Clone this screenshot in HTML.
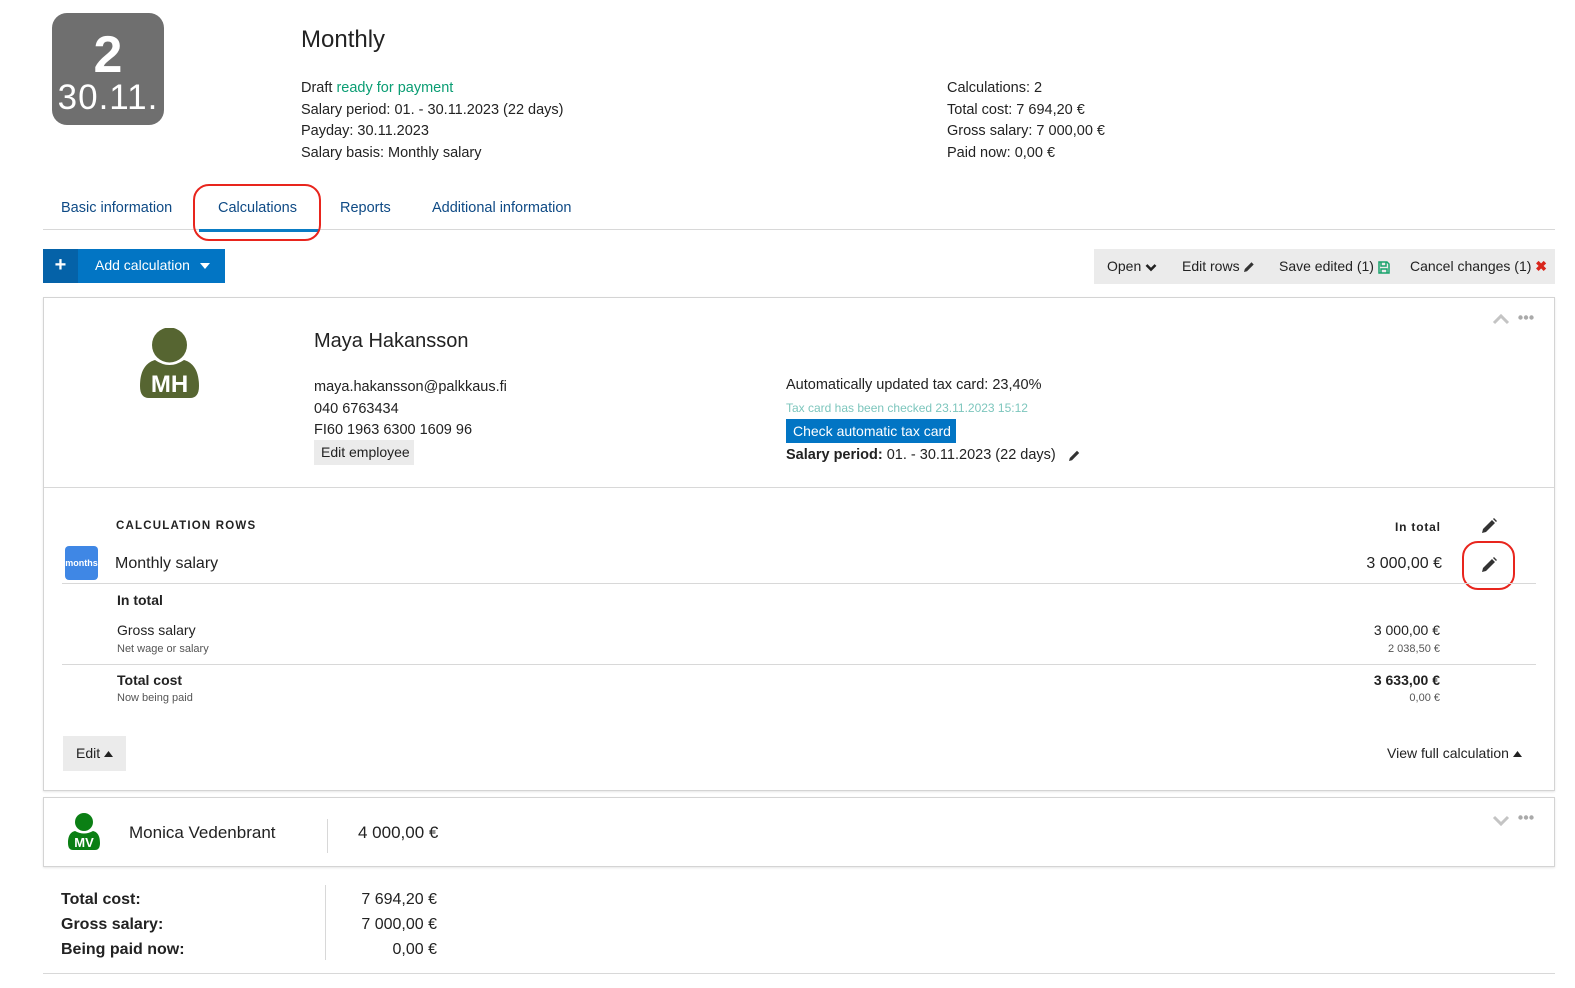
<!DOCTYPE html>
<html><head><meta charset="utf-8"><style>
*{margin:0;padding:0;box-sizing:border-box}
body{width:1575px;height:988px;background:#fff;font-family:"Liberation Sans",sans-serif;color:#222;position:relative;overflow:hidden}
.a{position:absolute;white-space:nowrap}
.t15{font-size:14.5px}
.r{text-align:right}
svg{display:inline-block;vertical-align:middle}
</style></head><body>
<div class="a" style="left:52px;top:13px;width:112px;height:112px;background:#6f6f6f;border-radius:15px;color:#fff;text-align:center">
<div style="font-size:52px;font-weight:bold;line-height:50px;margin-top:17px">2</div>
<div style="font-size:35px;line-height:36px;margin-top:0px;letter-spacing:1px">30.11.</div></div>
<div class="a" style="left:301px;top:26px;font-size:24px">Monthly</div>
<div class="a t15" style="left:301px;top:78px;line-height:21.7px">Draft <span style="color:#0a9d73">ready for payment</span><br>Salary period: 01. - 30.11.2023 (22 days)<br>Payday: 30.11.2023<br>Salary basis: Monthly salary</div>
<div class="a t15" style="left:947px;top:78px;line-height:21.7px">Calculations: 2<br>Total cost: 7 694,20 €<br>Gross salary: 7 000,00 €<br>Paid now: 0,00 €</div>
<div class="a t15" style="left:61px;top:200px;color:#0e4a85">Basic information</div>
<div class="a t15" style="left:218px;top:200px;color:#0e4a85">Calculations</div>
<div class="a t15" style="left:340px;top:200px;color:#0e4a85">Reports</div>
<div class="a t15" style="left:432px;top:200px;color:#0e4a85">Additional information</div>
<div class="a" style="left:43px;top:229px;width:1512px;height:1px;background:#d8d8d8"></div>
<div class="a" style="left:199px;top:229px;width:120px;height:3px;background:#0a7cc4"></div>
<div class="a" style="left:193px;top:184px;width:128px;height:57px;border:2px solid #e8251d;border-radius:16px"></div>
<div class="a" style="left:43px;top:249px;width:182px;height:34px;background:#0275c4"></div>
<div class="a" style="left:43px;top:249px;width:35px;height:34px;background:#0562a8;color:#fff;font-size:20px;font-weight:bold;text-align:center;line-height:32px">+</div>
<div class="a" style="left:95px;top:257px;color:#fff;font-size:14px">Add calculation <svg width="10" height="6" style="margin-left:6px"><path d="M0 0H10L5 6Z" fill="#fff"/></svg></div>
<div class="a" style="left:1094px;top:249px;width:461px;height:35px;background:#ebebeb"></div>
<div class="a" style="left:1107px;top:258px;font-size:14px">Open <svg width="12" height="9"><path d="M1.5 2L6 6.5 10.5 2" stroke="#222" stroke-width="2.6" fill="none"/></svg></div>
<div class="a" style="left:1182px;top:258px;font-size:14px">Edit rows <svg width="12" height="12"><path d="M1 11L1.8 8 8.5 1.3 10.7 3.5 4 10.2Z" fill="#333"/></svg></div>
<div class="a" style="left:1279px;top:258px;font-size:14px">Save edited (1) <svg width="12" height="13"><path d="M1 1H9L11 3V12H1Z M3 1V5H8V1 M3 12V8H9V12" stroke="#19a36c" stroke-width="1.5" fill="none"/></svg></div>
<div class="a" style="left:1410px;top:258px;font-size:14px">Cancel changes (1) <b style="color:#d9261c">✖</b></div>
<div class="a" style="left:43px;top:297px;width:1512px;height:494px;border:1px solid #d4d4d4;box-shadow:0 1px 2px rgba(0,0,0,.1)"></div>
<svg class="a" style="left:1492px;top:313px" width="18" height="12"><path d="M2 10L9 3 16 10" stroke="#c4c4c4" stroke-width="3" fill="none"/></svg>
<svg class="a" style="left:1518px;top:315px" width="16" height="5"><circle cx="2.5" cy="2.5" r="2.2" fill="#aaa"/><circle cx="8" cy="2.5" r="2.2" fill="#aaa"/><circle cx="13.5" cy="2.5" r="2.2" fill="#aaa"/></svg>
<svg class="a" style="left:140px;top:328px" width="59" height="70"><circle cx="29.5" cy="17" r="17.5" fill="#566531"/><path d="M0 58 C0 40 8 34 15 32 Q29.5 42 44 32 C51 34 59 40 59 58 Q59 70 50 70 L9 70 Q0 70 0 58Z" fill="#566531"/><text x="29.5" y="64" text-anchor="middle" fill="#fff" font-family="Liberation Sans" font-weight="bold" font-size="24">MH</text></svg>
<div class="a" style="left:314px;top:330px;font-size:20px">Maya Hakansson</div>
<div class="a t15" style="left:314px;top:377px;line-height:21.5px">maya.hakansson@palkkaus.fi<br>040 6763434<br>FI60 1963 6300 1609 96</div>
<div class="a" style="left:314px;top:440px;width:100px;height:25px;background:#ebebeb;font-size:14px;line-height:25px;padding-left:7px">Edit employee</div>
<div class="a t15" style="left:786px;top:377px">Automatically updated tax card: 23,40%</div>
<div class="a" style="left:786px;top:401px;font-size:12px;color:#7dc6bd">Tax card has been checked 23.11.2023 15:12</div>
<div class="a" style="left:786px;top:419px;width:170px;height:24px;background:#0275c4;color:#fff;font-size:14px;line-height:24px;padding-left:7px">Check automatic tax card</div>
<div class="a t15" style="left:786px;top:447px"><b>Salary period:</b> 01. - 30.11.2023 (22 days) &nbsp; <svg width="13" height="13"><path d="M1 12L1.8 9 9 1.8 11.2 4 4 11.2Z" fill="#333"/></svg></div>
<div class="a" style="left:44px;top:487px;width:1510px;height:1px;background:#d8d8d8"></div>
<div class="a" style="left:116px;top:520px;font-size:11.5px;font-weight:bold;letter-spacing:1.2px">CALCULATION ROWS</div>
<div class="a" style="left:1395px;top:520px;font-size:12px;font-weight:bold;letter-spacing:.8px">In total</div>
<svg class="a" style="left:1481px;top:518px" width="16" height="16"><path d="M1 15L2 11 11 2 14 5 5 14Z M12 1L13 0 16 3 15 4Z" fill="#333"/></svg>
<div class="a" style="left:65px;top:546px;width:33px;height:34px;background:#3f87e5;border-radius:4px;color:#fff;font-size:9px;line-height:34px;text-align:center;font-weight:bold">months</div>
<div class="a" style="left:115px;top:555px;font-size:16px">Monthly salary</div>
<div class="a r" style="left:1300px;width:142px;top:555px;font-size:16px">3 000,00 €</div>
<svg class="a" style="left:1481px;top:557px" width="16" height="16"><path d="M1 15L2 11 11 2 14 5 5 14Z M12 1L13 0 16 3 15 4Z" fill="#333"/></svg>
<div class="a" style="left:1462px;top:541px;width:53px;height:49px;border:2px solid #e8251d;border-radius:16px"></div>
<div class="a" style="left:62px;top:583px;width:1474px;height:1px;background:#d8d8d8"></div>
<div class="a" style="left:117px;top:592px;font-size:14px;font-weight:bold">In total</div>
<div class="a" style="left:117px;top:622px;font-size:14px">Gross salary</div>
<div class="a" style="left:117px;top:643px;font-size:11px;color:#555">Net wage or salary</div>
<div class="a r" style="left:1300px;width:140px;top:622px;font-size:14px">3 000,00 €</div>
<div class="a r" style="left:1300px;width:140px;top:643px;font-size:11px;color:#555">2 038,50 €</div>
<div class="a" style="left:62px;top:664px;width:1474px;height:1px;background:#d8d8d8"></div>
<div class="a" style="left:117px;top:672px;font-size:14px;font-weight:bold">Total cost</div>
<div class="a" style="left:117px;top:692px;font-size:11px;color:#555">Now being paid</div>
<div class="a r" style="left:1300px;width:140px;top:672px;font-size:14px;font-weight:bold">3 633,00 €</div>
<div class="a r" style="left:1300px;width:140px;top:692px;font-size:11px;color:#555">0,00 €</div>
<div class="a" style="left:63px;top:736px;width:63px;height:35px;background:#ebebeb;font-size:14px;line-height:35px;padding-left:13px">Edit <svg width="9" height="6"><path d="M0 6H9L4.5 0Z" fill="#222"/></svg></div>
<div class="a" style="left:1387px;top:745px;font-size:14px">View full calculation <svg width="9" height="6"><path d="M0 6H9L4.5 0Z" fill="#222"/></svg></div>
<div class="a" style="left:43px;top:797px;width:1512px;height:70px;border:1px solid #d4d4d4;box-shadow:0 1px 2px rgba(0,0,0,.1)"></div>
<svg class="a" style="left:1492px;top:814px" width="18" height="12"><path d="M2 3L9 10 16 3" stroke="#c4c4c4" stroke-width="3" fill="none"/></svg>
<svg class="a" style="left:1518px;top:815px" width="16" height="5"><circle cx="2.5" cy="2.5" r="2.2" fill="#aaa"/><circle cx="8" cy="2.5" r="2.2" fill="#aaa"/><circle cx="13.5" cy="2.5" r="2.2" fill="#aaa"/></svg>
<svg class="a" style="left:68px;top:813px" width="32" height="37"><circle cx="16" cy="9" r="9" fill="#0b7f14"/><path d="M0 30 C0 22 3 19 7 18 Q16 23 25 18 C29 19 32 22 32 30 Q32 37 27 37 L5 37 Q0 37 0 30Z" fill="#0b7f14"/><text x="16" y="34" text-anchor="middle" fill="#fff" font-family="Liberation Sans" font-weight="bold" font-size="13">MV</text></svg>
<div class="a" style="left:129px;top:823px;font-size:17px">Monica Vedenbrant</div>
<div class="a" style="left:327px;top:819px;width:1px;height:34px;background:#d8d8d8"></div>
<div class="a" style="left:358px;top:823px;font-size:17px">4 000,00 €</div>
<div class="a" style="left:61px;top:887px;font-size:16px;font-weight:bold;line-height:25px">Total cost:<br>Gross salary:<br>Being paid now:</div>
<div class="a" style="left:325px;top:885px;width:1px;height:75px;background:#d8d8d8"></div>
<div class="a r" style="left:300px;width:137px;top:887px;font-size:16px;line-height:25px">7 694,20 €<br>7 000,00 €<br>0,00 €</div>
<div class="a" style="left:43px;top:973px;width:1512px;height:1px;background:#d8d8d8"></div>
</body></html>
